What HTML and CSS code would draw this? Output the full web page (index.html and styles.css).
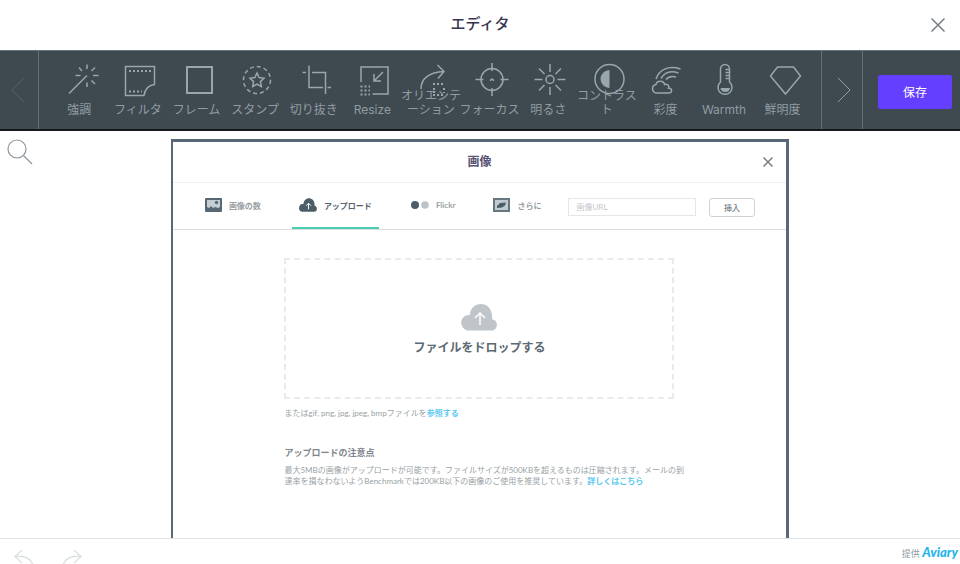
FILE: index.html
```html
<!DOCTYPE html>
<html lang="ja">
<head>
    <meta charset="UTF-8">
    <meta name="viewport" content="width=device-width, initial-scale=1.0">
    <title>エディタ</title>
    <link rel="stylesheet" href="styles.css">
</head>
<body>

    <header class="header">
        <h1>エディタ</h1>
        <button class="close" aria-label="閉じる">
            <svg width="16" height="16" viewBox="0 0 16 16"><path d="M1.500 1.500l13 13M14.500 1.500l-13 13"/></svg>
        </button>
    </header>

    <div class="toolbar">
        <button class="nav prev" aria-label="前へ" disabled>
            <svg width="14" height="26" viewBox="0 0 14 26"><path d="M13 1L1 13l12 12"/></svg>
        </button>
        <div class="tools">
            <button class="tool">
                <svg viewBox="0 0 40 40"><path d="M8 33.500l18-18M26 4.500V9M26 22.500V27M32 15.500h5.500M14.500 15.500h5M18 7.500l3 3.500M34 7.500L30.500 11M30.500 20.500L34 24"/></svg>
                <span>強調</span>
            </button>
            <button class="tool">
                <svg viewBox="0 0 40 40"><path d="M5.500 6.500h29v18q-9 1-10.500 11H5.500z"/><path class="dots" d="M9 11h23M9 31.500h13"/></svg>
                <span>フィルタ</span>
            </button>
            <button class="tool">
                <svg viewBox="0 0 40 40"><path class="thick" d="M8 7h25v26H8z"/></svg>
                <span>フレーム</span>
            </button>
            <button class="tool">
                <svg viewBox="0 0 40 40"><circle class="dashes" cx="20" cy="20" r="13.500"/><path d="M20 13l2.100 4.600 4.900.6-3.600 3.400.9 5-4.300-2.500-4.300 2.500.9-5-3.600-3.400 4.900-.6z"/></svg>
                <span>スタンプ</span>
            </button>
            <button class="tool">
                <svg viewBox="0 0 40 40"><path d="M13 5.500v22h14M16 12.500h13.500V34M6.500 12.500H10M31.500 27.500H35"/></svg>
                <span>切り抜き</span>
            </button>
            <button class="tool">
                <svg viewBox="0 0 40 40"><path d="M7 22V7h27v27H18.500M29 12l-9 9M20 14v7h7"/><path class="dots" d="M6.500 26.500H16M6.500 30.500H16M6.500 34.500H16"/></svg>
                <span>Resize</span>
            </button>
            <button class="tool">
                <svg viewBox="0 0 40 40"><path d="M8 29C8 19 16 12 31 11.500M24.500 5l6.500 6.500-6 7"/><path class="dots" d="M20 24h12M20 35h12M21 28v5M31 28v5"/></svg>
                <span>オリエンテ<br>ーション</span>
            </button>
            <button class="tool">
                <svg viewBox="0 0 40 40"><circle cx="20" cy="19.500" r="11"/><path d="M20 3v8M20 28v8M3.500 19.500h8M28.500 19.500h8M18.500 21c0-2.500 3-2.500 3 0"/></svg>
                <span>フォーカス</span>
            </button>
            <button class="tool">
                <svg viewBox="0 0 40 40"><circle cx="20" cy="19.500" r="4"/><path d="M20 4v8M20 27v8M4.500 19.500h8M27.500 19.500h8M9 8.500l5.500 5.500M25.500 25l5.500 5.500M31 8.500L25.500 14M14.500 25L9 30.500"/></svg>
                <span>明るさ</span>
            </button>
            <button class="tool">
                <svg viewBox="0 0 40 40"><circle cx="20.500" cy="19" r="14.500"/><path class="solid" d="M20.500 10v18a9 9 0 0 1 0-18z"/></svg>
                <span>コントラス<br>ト</span>
            </button>
            <button class="tool">
                <svg viewBox="0 0 40 40"><path d="M9.500 33a4.300 4.300 0 0 1-.5-8.500c.5-4.500 8-4.500 8.500 0 4-1 5 2.500 4 3.500 4.500.5 3.500 5 .5 5zM9 19C12 10 21 5 33.500 9M14 18.500C17.500 12.500 24 10.500 31.500 13M19 19.500c2.500-3 6-3.500 10-2.500"/></svg>
                <span>彩度</span>
            </button>
            <button class="tool">
                <svg viewBox="0 0 40 40"><path d="M14.500 22V9a4.500 4.500 0 0 1 9 0v13a7 7 0 1 1-9 0zM19.500 9.500h4M19.500 12.500h4M19.500 15.500h4M19.500 18.500h4"/><path class="solid" d="M14.500 28h9.500a4.800 4.800 0 0 1-9.500 0z"/></svg>
                <span>Warmth</span>
            </button>
            <button class="tool">
                <svg viewBox="0 0 40 40"><path d="M12.500 7h16l7 9-15 18-15-18z"/></svg>
                <span>鮮明度</span>
            </button>
        </div>
        <button class="nav next" aria-label="次へ">
            <svg width="14" height="26" viewBox="0 0 14 26"><path d="M1 1l12 12L1 25"/></svg>
        </button>
        <div class="save-wrap">
            <button class="save">保存</button>
        </div>
    </div>

    <main class="canvas">
        <button class="magnifier" aria-label="ズーム">
            <svg width="26" height="26" viewBox="0 0 26 26"><circle cx="10" cy="10" r="9"/><path d="M16.500 16.500l8.500 8.500"/></svg>
        </button>

        <section class="photo">
            <div class="photo-header">
                <h2>画像</h2>
                <button class="close" aria-label="閉じる">
                    <svg width="12" height="12" viewBox="0 0 12 12"><path d="M1.500 1.500l9 9M10.500 1.500l-9 9"/></svg>
                </button>
            </div>
            <div class="tabs">
                <button class="tab">
                    <svg width="17" height="14" viewBox="0 0 17 14"><rect width="17" height="14" rx="1" fill="#566874"/><path d="M2 2h13v7l-2 1-3-1-2 1-2-2-2 2-2-1z" fill="#c3cdd3"/><circle cx="11.500" cy="4.500" r="1.700" fill="#566874"/></svg>
                    <span>画像の数</span>
                </button>
                <button class="tab active">
                    <svg width="18" height="14" viewBox="0 0 36 27"><path d="M7 27a7 7 0 0 1 2-15.500C9 5 14 0 20 0s12 5 11 15c7 1 6 12-1 12z" fill="#4b5d68"/><path d="M19 22V10M14 15l5-5 5 5" fill="none" stroke="#fff" stroke-width="2"/></svg>
                    <span>アップロード</span>
                </button>
                <button class="tab">
                    <svg width="19" height="14" viewBox="0 0 19 14"><circle cx="5" cy="7" r="4" fill="#4b5d68"/><circle cx="15" cy="7" r="3.800" fill="#bcc3c8"/></svg>
                    <span>Flickr</span>
                </button>
                <button class="tab">
                    <svg width="17" height="14" viewBox="0 0 17 14"><rect x="1" y="1" width="15" height="12" fill="#c0cacf" stroke="#667782" stroke-width="2"/><path d="M4 8l3-3 6-.5-1 3-3 2-5 .5z" fill="#4b5d68"/></svg>
                    <span>さらに</span>
                </button>
                <input class="url" type="text" placeholder="画像URL" aria-label="画像URL">
                <button class="insert">挿入</button>
            </div>
            <div class="upload">
                <div class="dropzone">
                    <svg width="36" height="27" viewBox="0 0 36 27"><path d="M7 26.500a7.500 7.500 0 0 1 2-15.500C9 4 14 0 20 0s12 5 11 15.500c7 0 6 11 0 11z" fill="#bfc5c9"/><path d="M19 21V9M14 14l5-5 5 5" fill="none" stroke="#fff" stroke-width="1.500"/></svg>
                    <strong>ファイルをドロップする</strong>
                </div>
                <p class="browse">またはgif, png, jpg, jpeg, bmpファイルを<a href="#">参照する</a></p>
                <h3>アップロードの注意点</h3>
                <p class="note">最大5MBの画像がアップロードが可能です。ファイルサイズが500KBを超えるものは圧縮されます。メールの到<br>達率を損なわないようBenchmarkでは200KB以下の画像のご使用を推奨しています。<a href="#">詳しくはこちら</a></p>
            </div>
        </section>
    </main>

    <footer class="footer">
        <div class="history">
            <button aria-label="元に戻す">
                <svg width="20" height="16" viewBox="0 0 20 16"><path d="M8 1L1 7.500 8 14M1 7.500c9-1 15 1 18 8"/></svg>
            </button>
            <button aria-label="やり直す">
                <svg width="20" height="16" viewBox="0 0 20 16"><path d="M12 1l7 6.500-7 6.500M19 7.500c-9-1-15 1-18 8"/></svg>
            </button>
        </div>
        <div class="credit">提供 <em>Aviary</em></div>
    </footer>

</body>
</html>
```
FILE: styles.css
```css
* {
    box-sizing: border-box;
}

body {
    margin: 0;
    height: 100vh;
    display: flex;
    flex-direction: column;
    overflow: hidden;
    background: #fff;
    font-family: Inter, "Noto Sans CJK JP", sans-serif;
}

h1, h2, h3, p {
    margin: 0;
}

button {
    padding: 0;
    border: none;
    background: none;
    font-family: inherit;
    cursor: pointer;
}

svg {
    display: block;
    flex: none;
}

a {
    color: #5cc9f0;
    font-weight: bold;
    text-decoration: none;
}

.header {
    position: relative;
    flex: none;
    height: 50px;
    display: flex;
    align-items: center;
    justify-content: center;
}

.header h1 {
    padding-bottom: 2px;
    font-size: 15px;
    line-height: 20px;
    font-weight: 500;
    color: #39344f;
}

.close {
    position: absolute;
    right: 14px;
}

.close svg {
    fill: none;
    stroke: #777f86;
    stroke-width: 1.5;
}

/* toolbar */
.toolbar {
    flex: none;
    display: flex;
    height: 81px;
    background: #3e4950;
    border-top: 1px solid #69757b;
    border-bottom: 2px solid #15191f;
}

.nav {
    display: flex;
    align-items: center;
    justify-content: center;
}

.nav svg {
    fill: none;
    stroke: #929da3;
    stroke-width: 1;
}

.prev {
    width: 39px;
    padding-right: 2px;
    border-right: 1px solid #637077;
}

.prev svg {
    stroke: #56636a;
}

.next {
    width: 42px;
    padding-left: 4px;
    border: solid #637077;
    border-width: 0 1px;
}

.tools {
    flex: 1;
    display: flex;
    padding: 9px 9px 9px 11px;
}

.tool {
    position: relative;
    flex: 1 1 0;
    min-width: 0;
    display: flex;
    flex-direction: column;
    align-items: center;
    color: #919ca2;
}

.tool svg {
    width: 40px;
    height: 40px;
    margin-left: 4px;
    fill: none;
    stroke: #98a6ae;
    stroke-width: 1.5;
}

.tool .thick {
    stroke-width: 2;
}

.tool .dots {
    stroke-width: 2;
    stroke-dasharray: 2 2;
}

.tool .dashes {
    stroke-dasharray: 4 3;
}

.tool .solid {
    fill: #98a6ae;
    stroke: none;
}

/* long labels grow upwards over the icon */
.tool span {
    position: absolute;
    bottom: 3px;
    font-size: 12px;
    line-height: 14px;
    white-space: nowrap;
}

.save-wrap {
    display: flex;
    align-items: center;
    padding: 4px 8px 0 15px;
}

.save {
    width: 74px;
    height: 34px;
    padding-bottom: 2px;
    border-radius: 2px;
    background: #643fff;
    color: #fff;
    font-size: 12px;
}

/* canvas */
.canvas {
    position: relative;
    flex: 1;
    min-height: 0;
    overflow: hidden;
    padding-top: 8px;
}

.magnifier {
    position: absolute;
    top: 8px;
    left: 7px;
}

.magnifier svg {
    fill: none;
    stroke: #8d979d;
    stroke-width: 1.2;
}

.photo {
    width: 64.4%;
    height: 450px;
    margin: 0 auto;
    border: 3px solid #596878;
    border-width: 3px 3px 3px 2px;
    color: #999fa5;
    font-family: Lato, "Noto Sans CJK JP", sans-serif;
}

.photo-header {
    position: relative;
    display: flex;
    align-items: center;
    justify-content: center;
    height: 41px;
    border-bottom: 1px solid #f0f0f2;
}

.photo-header h2 {
    font-size: 12px;
    line-height: 16px;
    color: #555273;
}

.photo-header .close {
    right: 12px;
}

.tabs {
    display: flex;
    height: 47px;
    padding: 0 31px 0 25px;
    border-bottom: 1px solid #dcdddf;
}

.tab {
    display: flex;
    align-items: center;
    gap: 7px;
    margin-right: 24px;
    padding: 0 7px;
    color: #999fa4;
    font-size: 8px;
    font-weight: bold;
    white-space: nowrap;
    border-bottom: 2px solid transparent;
}

.tab.active {
    color: #566570;
    border-color: #4acdb2;
}

.url {
    flex: 1;
    min-width: 0;
    height: 18px;
    margin: 15px 13px 0 0;
    padding: 0 7px;
    border: 1px solid #e5e6e8;
    font: 8px Lato, "Noto Sans CJK JP", sans-serif;
}

.tab + .url {
    margin-left: -4px;
}

.url::placeholder {
    color: #c3c7ca;
}

.insert {
    width: 46px;
    height: 19px;
    margin-top: 15px;
    border: 1px solid #cfd1d3;
    border-radius: 3px;
    color: #7b8389;
    font-size: 8px;
    font-weight: 500;
}

.upload {
    width: 390px;
    margin: 0 auto;
    padding-top: 28px;
    white-space: nowrap;
}

.dropzone {
    height: 141px;
    display: flex;
    flex-direction: column;
    align-items: center;
    justify-content: center;
    gap: 9px;
    padding-top: 2px;
    border: 2px dashed #e9eaeb;
}

.dropzone strong {
    font-size: 12px;
    line-height: 16px;
    color: #5c6972;
}

.browse {
    margin-top: 8px;
    font-size: 8px;
    line-height: 12px;
}

.upload h3 {
    margin-top: 27px;
    font-size: 9px;
    line-height: 14px;
    color: #7e868c;
}

.note {
    margin-top: 5px;
    font-size: 8px;
    line-height: 11px;
}

/* footer */
.footer {
    flex: none;
    display: flex;
    justify-content: space-between;
    height: 26px;
    overflow: hidden;
    border-top: 1px solid #dfe3e6;
}

.history {
    display: flex;
    align-items: flex-start;
    gap: 28px;
    padding: 10px 14px 0;
}

.history svg {
    fill: none;
    stroke: #dde1e4;
    stroke-width: 1.5;
}

.credit {
    padding: 4px 2px 0 0;
    font-size: 9px;
    line-height: 18px;
    color: #8e9ba5;
}

.credit em {
    font: italic 900 13px/18px Lato, cursive;
    color: #1fb5ed;
}
```
